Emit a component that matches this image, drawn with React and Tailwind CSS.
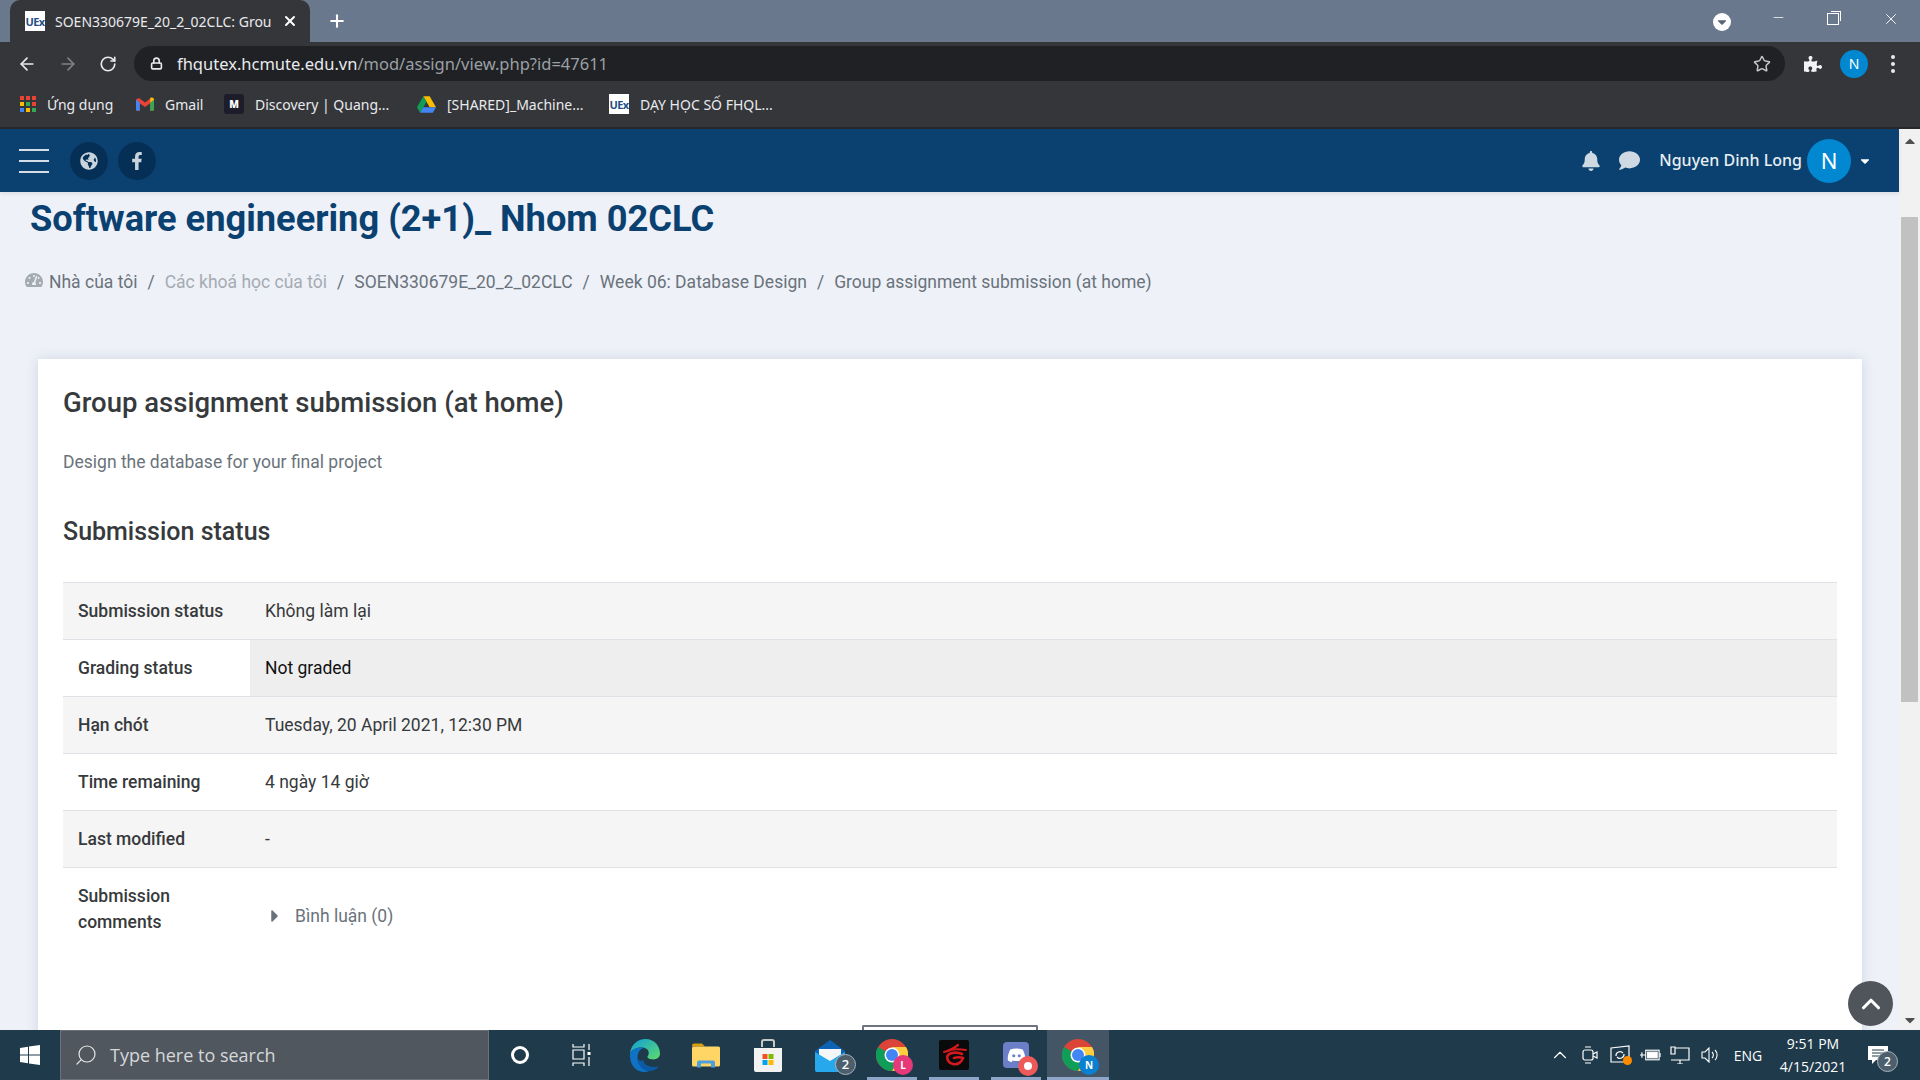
import React from 'react';
import { ArrowLeft, ArrowRight, RotateCw, Lock, Star, X, Plus, Minus, ChevronUp, Search } from 'lucide-react';
import { FaBell, FaComment, FaFacebookF, FaGlobeAmericas, FaPuzzlePiece, FaCaretDown, FaCaretRight, FaCaretUp, FaTachometerAlt } from 'react-icons/fa';

const UExIcon = () => (
  <div className="w-5 h-5 bg-white flex items-center justify-center overflow-hidden shrink-0">
    <span className="text-[11px] font-bold text-[#1f4f86] leading-none tracking-tighter">UEx</span>
  </div>
);

const AppsIcon = () => {
  const colors = ['#ea4335', '#ea4335', '#ea4335', '#fbbc04', '#34a853', '#ea4335', '#4285f4', '#fbbc04', '#34a853'];
  return (
    <div className="grid grid-cols-3 gap-[2px] w-4 h-4 shrink-0">
      {colors.map((c, i) => <svg key={i} viewBox="0 0 4 4" className="w-full h-full"><rect width="4" height="4" fill={c} /></svg>)}
    </div>
  );
};

const GmailIcon = () => (
  <svg viewBox="0 0 24 18" className="w-[18px] h-[14px] shrink-0">
    <path d="M0 3v13a2 2 0 0 0 2 2h3V8l7 5 7-5v10h3a2 2 0 0 0 2-2V3l-4-2-8 6-8-6z" fill="#ea4335" />
    <path d="M0 3v13a2 2 0 0 0 2 2h3V7z" fill="#4285f4" />
    <path d="M24 3v13a2 2 0 0 1-2 2h-3V7z" fill="#34a853" />
    <path d="M19 1v6l5-3.6V3c0-2-2.6-3.4-5-2z" fill="#fbbc04" />
  </svg>
);

const DriveIcon = () => (
  <svg viewBox="0 0 24 21" className="w-[19px] h-[17px] shrink-0">
    <path d="M8 0h8l8 14h-8z" fill="#fbbc04" />
    <path d="M8 0l4 7-8 14-4-7z" fill="#0f9d58" />
    <path d="M8 14h16l-4 7H4z" fill="#4285f4" />
  </svg>
);

const ChromeLogo = ({ badge, badgeClass }) => (
  <div className="relative w-8 h-8">
    <svg viewBox="0 0 32 32" className="w-8 h-8">
      <circle cx="16" cy="16" r="16" fill="#db4437" />
      <path d="M16 16 L2.1 8 A16 16 0 0 0 16 32 L24 18z" fill="#0f9d58" />
      <path d="M16 8h14a16 16 0 0 1-14 24l8-14z" fill="#ffcd40" />
      <circle cx="16" cy="16" r="7.5" fill="#fff" />
      <circle cx="16" cy="16" r="6" fill="#4285f4" />
    </svg>
    <div className={`absolute -right-[5px] -bottom-[4px] w-5 h-5 rounded-full flex items-center justify-center text-[10px] font-bold text-white ${badgeClass}`}>{badge}</div>
  </div>
);

const EdgeLogo = () => (
  <svg viewBox="0 0 32 34" className="w-[31px] h-[33px]">
    <defs>
      <linearGradient id="edgeTop" x1="0" y1="0" x2="1" y2="1">
        <stop offset="0" stopColor="#0f9fd8" />
        <stop offset="1" stopColor="#5fdc6b" />
      </linearGradient>
    </defs>
    <path d="M1 15C2 6 9 0 17 0c9 0 15 7 15 15 0 4-3 6-7 6-3 0-6-1-6-3 2-2 2-6-1-8-6-3-15 0-17 5z" fill="url(#edgeTop)" />
    <path d="M1 15c2-5 10-8 15-6-5 1-8 6-7 12 1 6 6 11 12 12-2 1-4 1-6 1C7 34 0 26 1 15z" fill="#0f72c4" />
    <path d="M9 21c0 6 6 12 12 12 4 0 8-2 10-5-3 1-7 1-10 0-4-1-6-3-6-6-2 1-4 0-6-1z" fill="#0b5aa5" />
  </svg>
);

const FolderLogo = () => (
  <svg viewBox="0 0 28 24" className="w-[28px] h-[25px]">
    <path d="M0 2a2 2 0 0 1 2-2h8l3 3h-13z" fill="#d99e0c" />
    <rect y="3" width="28" height="20" rx="1.5" fill="#ffd566" />
    <path d="M5 24v-5a2 2 0 0 1 2-2h14a2 2 0 0 1 2 2v5h-4v-4h-10v4z" fill="#4d9fdb" />
  </svg>
);

const StoreLogo = () => (
  <svg viewBox="0 0 28 33" className="w-[28px] h-[33px]">
    <path d="M8 8V3a2 2 0 0 1 2-2h8a2 2 0 0 1 2 2v5" fill="none" stroke="#c8c8c8" strokeWidth="2" />
    <path d="M0 9h28v22a2 2 0 0 1-2 2H2a2 2 0 0 1-2-2z" fill="#f2f2f2" />
    <rect x="8.5" y="15" width="5" height="5" fill="#f25022" />
    <rect x="14.5" y="15" width="5" height="5" fill="#7fba00" />
    <rect x="8.5" y="21" width="5" height="5" fill="#00a4ef" />
    <rect x="14.5" y="21" width="5" height="5" fill="#ffb900" />
  </svg>
);

const MailLogo = () => (
  <div className="relative w-[30px] h-[30px]">
    <svg viewBox="0 0 30 32" className="w-[30px] h-[32px]">
      <path d="M0 11 15 0l15 11v19a2 2 0 0 1-2 2H2a2 2 0 0 1-2-2z" fill="#0c63b5" />
      <path d="M4 9h22v8l-11 6-11-6z" fill="#f4f6f8" />
      <path d="M0 12l15 9 15-9v18a2 2 0 0 1-2 2H2a2 2 0 0 1-2-2z" fill="#27a7ec" />
    </svg>
    <div className="absolute -right-[11px] -bottom-[5px] w-[21px] h-[21px] rounded-full bg-[#4d5e6c] border border-[#a9b4bc] flex items-center justify-center text-[13px] font-semibold text-white">2</div>
  </div>
);

const GarenaLogo = () => (
  <div className="w-[30px] h-[30px] bg-[#0a0a0a] rounded-[2px] flex items-center justify-center">
    <svg viewBox="0 0 26 24" className="w-[26px] h-[24px]" fill="none" stroke="#d3191f" strokeLinecap="round">
      <path d="M3 9C8 8 13 5 17 2" strokeWidth="2.2" />
      <path d="M8 7c5-1 11-1 17 0" strokeWidth="1.8" />
      <path d="M21 11c-4-2-11-2-14 1-2 3 0 8 5 9 5 1 9-2 10-6-3-1-6-1-9 0" strokeWidth="2.6" />
    </svg>
  </div>
);

const DiscordLogo = () => (
  <div className="relative w-[26px] h-[26px] rounded-[4px] bg-[#6a7fc8] flex items-center justify-center">
    <svg viewBox="0 0 24 18" className="w-[19px] h-[14px]">
      <path d="M4 2c5-2 11-2 16 0 2 4 4 9 3 14-2 1-3 2-5 2l-1-2c-3 1-7 1-10 0l-1 2c-2 0-3-1-5-2C0 11 2 6 4 2z" fill="#fff" />
      <circle cx="8.5" cy="10" r="2" fill="#6a7fc8" />
      <circle cx="15.5" cy="10" r="2" fill="#6a7fc8" />
    </svg>
    <div className="absolute -right-[9px] -bottom-[8px] w-[20px] h-[20px] rounded-full bg-[#ee5a5a] flex items-center justify-center">
      <div className="w-2 h-2 rounded-full bg-white" />
    </div>
  </div>
);

const WindowsLogo = () => (
  <svg viewBox="0 0 20 20" className="w-5 h-5">
    <path d="M0 3l8-1.2V9.5H0zM9 1.6 20 0v9.5H9zM0 10.5h8v7.7L0 17zM9 10.5h11V20L9 18.4z" fill="#fff" />
  </svg>
);

const taskItems = [
  { id: 'edge', icon: <EdgeLogo /> },
  { id: 'files', icon: <FolderLogo /> },
  { id: 'store', icon: <StoreLogo /> },
  { id: 'mail', icon: <MailLogo /> },
  { id: 'chrome-l', icon: <ChromeLogo badge="L" badgeClass="bg-[#e6397a]" />, open: true },
  { id: 'garena', icon: <GarenaLogo />, open: true },
  { id: 'discord', icon: <DiscordLogo />, open: true },
  { id: 'chrome-n', icon: <ChromeLogo badge="N" badgeClass="bg-[#0b7fd0]" />, open: true, active: true },
];

const rows = [
  { label: 'Submission status', value: 'Không làm lại', bg: 'bg-[#f5f5f5]' },
  { label: 'Grading status', value: 'Not graded', cellBg: 'bg-[#eeeeee] text-[#111]' },
  { label: 'Hạn chót', value: 'Tuesday, 20 April 2021, 12:30 PM', bg: 'bg-[#f5f5f5]' },
  { label: 'Time remaining', value: '4 ngày 14 giờ' },
  { label: 'Last modified', value: '-', bg: 'bg-[#f5f5f5]' },
];

const bookmarks = [
  { icon: <AppsIcon />, text: 'Ứng dụng', cls: 'w-[116px]' },
  { icon: <GmailIcon />, text: 'Gmail', cls: 'w-[88px]' },
  { icon: <div className="w-5 h-5 rounded-[3px] bg-[#1c1c2b] flex items-center justify-center text-[10px] font-black text-white shrink-0">M</div>, text: 'Discovery | Quang...', cls: 'w-[193px]' },
  { icon: <DriveIcon />, text: '[SHARED]_Machine...', cls: 'w-[192px]' },
  { icon: <UExIcon />, text: 'DẠY HỌC SỐ FHQL...', cls: 'w-[180px]' },
];

const BrowserChrome = () => (
  <div className="shrink-0 font-['Noto_Sans',sans-serif]">
    <div className="h-[42px] bg-[#6a788d] flex items-end pl-[10px] relative">
      <div className="w-[300px] h-[42px] bg-[#35363a] rounded-t-[10px] flex items-center pl-[15px] pr-3">
        <UExIcon />
        <span className="ml-[10px] text-[14px] text-[#e8eaed] whitespace-nowrap">SOEN330679E_20_2_02CLC: Grou</span>
        <X size={16} strokeWidth={3} className="ml-auto text-white shrink-0" />
      </div>
      <Plus size={20} strokeWidth={2.5} className="ml-[17px] mb-[11px] text-white" />
      <div className="ml-auto flex items-center h-full pb-2">
        <div className="w-[18px] h-[18px] rounded-full bg-white flex items-center justify-center mr-[40px] mt-[9px]">
          <FaCaretDown size={14} className="text-[#5a6577]" />
        </div>
        <Minus size={15} strokeWidth={1.2} className="text-white mr-[41px] mt-[1px]" />
        <div className="relative w-[12px] h-[12px] border border-white mr-[43px] mt-[3px]">
          <div className="absolute -top-[3px] -right-[3px] w-[10px] h-[10px] border-t border-r border-white" />
        </div>
        <X size={18} strokeWidth={1.2} className="text-white mr-[20px] mt-[3px]" />
      </div>
    </div>
    <div className="h-[43px] bg-[#35363a] flex items-center pl-[17px]">
      <ArrowLeft size={20} className="text-[#e8eaed]" />
      <ArrowRight size={20} className="ml-[21px] text-[#7f8185]" />
      <RotateCw size={18} strokeWidth={2.2} className="ml-[21px] text-[#e8eaed]" />
      <div className="ml-[17px] w-[1651px] h-[35px] rounded-full bg-[#202124] flex items-center pl-[16px]">
        <Lock size={13} strokeWidth={3} className="text-[#e8eaed] shrink-0" />
        <span className="ml-[14px] mt-[2px] text-[16.5px] text-[#e8eaed] whitespace-nowrap">fhqutex.hcmute.edu.vn<span className="text-[#9aa0a6]">/mod/assign/view.php?id=47611</span></span>
        <Star size={18} className="ml-auto mr-[14px] text-[#c4c7c5]" />
      </div>
      <FaPuzzlePiece size={18} className="ml-[19px] text-[#f1f3f4]" />
      <div className="ml-[18px] w-7 h-7 rounded-full bg-[#0288d1] flex items-center justify-center text-[14px] text-white">N</div>
      <div className="ml-[23px] flex flex-col gap-[3px]">
        <div className="w-1 h-1 rounded-full bg-[#e8eaed]" />
        <div className="w-1 h-1 rounded-full bg-[#e8eaed]" />
        <div className="w-1 h-1 rounded-full bg-[#e8eaed]" />
      </div>
    </div>
    <div className="h-[42px] bg-[#35363a] flex items-center pl-5 pb-[4px]">
      {bookmarks.map((b) => (
        <div key={b.text} className={`flex items-center gap-[11px] ${b.cls}`}>
          {b.icon}
          <span className="text-[14px] text-[#e8eaed] whitespace-nowrap">{b.text}</span>
        </div>
      ))}
    </div>
    <div className="h-[2px] bg-[#28292c]" />
  </div>
);

const Navbar = () => (
  <div className="relative z-10 h-[63px] shrink-0 bg-[#0a4170] flex items-center pl-[19px] pr-[27px] shadow-[0_2px_4px_rgba(0,0,0,0.08)]">
    <div className="w-[30px] flex flex-col gap-[9px]">
      <div className="h-[2px] bg-[#d5dde6]" />
      <div className="h-[2px] bg-[#d5dde6]" />
      <div className="h-[2px] bg-[#d5dde6]" />
    </div>
    <div className="ml-[21px] w-[38px] h-[38px] rounded-full bg-[#062f55] flex items-center justify-center">
      <FaGlobeAmericas size={18} className="text-[#c9d3dc]" />
    </div>
    <div className="ml-[10px] w-[38px] h-[38px] rounded-full bg-[#062f55] flex items-center justify-center">
      <FaFacebookF size={18} className="text-[#c9d3dc]" />
    </div>
    <FaBell size={20} className="ml-auto text-[#cfd9e2]" />
    <FaComment size={21} className="ml-[18px] text-[#cfd9e2]" />
    <span className="ml-[19px] -mt-[2px] text-[16px] font-medium text-[#e9eef3] whitespace-nowrap">Nguyen Dinh Long</span>
    <div className="ml-[5px] w-11 h-11 rounded-full bg-[#0288d1] flex items-center justify-center text-[22px] text-white">N</div>
    <FaCaretDown size={14} className="ml-[7px] text-white" />
  </div>
);

const Scrollbar = () => (
  <div className="w-[21px] shrink-0 bg-[#f1f1f1] flex flex-col items-center">
    <FaCaretUp size={16} className="mt-[4px] text-[#505050]" />
    <div className="mt-[68px] w-[17px] h-[485px] bg-[#c1c1c1]" />
    <FaCaretDown size={16} className="mt-auto mb-[2px] text-[#505050]" />
  </div>
);

const Page = () => (
  <div className="flex-1 overflow-hidden bg-[#eef1f8] font-['Roboto',sans-serif]">
    <h1 className="mt-[5px] pl-[30px] text-[36.25px] leading-[44px] font-bold text-[#0a4170]">Software engineering (2+1)_ Nhom 02CLC</h1>
    <div className="mt-[28px] pl-[25px] h-[26px] flex items-center text-[17.5px] text-[#6a737b]">
      <FaTachometerAlt size={18} className="text-[#a5abb2] mr-[6px] -mt-1" />
      <span>Nhà của tôi</span>
      <span className="mx-[10px]">/</span>
      <span className="text-[#a5abb2]">Các khoá học của tôi</span>
      <span className="mx-[10px]">/</span>
      <span>SOEN330679E_20_2_02CLC</span>
      <span className="mx-[10px]">/</span>
      <span>Week 06: Database Design</span>
      <span className="mx-[10px]">/</span>
      <span>Group assignment submission (at home)</span>
    </div>
    <div className="mt-[64px] ml-[38px] w-[1824px] bg-white shadow-[0_0_12px_rgba(30,50,90,0.14)] px-[25px] pt-[26px] pb-[200px]">
      <h2 className="text-[27.5px] leading-[36px] font-medium text-[#373a3c]">Group assignment submission (at home)</h2>
      <p className="mt-[28px] text-[17.5px] leading-[27px] text-[#6a737b]">Design the database for your final project</p>
      <h3 className="mt-[41px] text-[25px] leading-[30px] font-medium text-[#373a3c]">Submission status</h3>
      <table className="mt-[35px] w-full text-[17.5px] leading-[26px] text-[#373a3c] border-collapse">
        <tbody>
          {rows.map((r) => (
            <tr key={r.label} className={`h-[57px] border-t border-[#dee2e6] ${r.bg || ''}`}>
              <th className="w-[187px] pl-[15px] text-left font-medium">{r.label}</th>
              <td className={`pl-[15px] ${r.cellBg || ''}`}>{r.value}</td>
            </tr>
          ))}
          <tr className="h-[95px] border-t border-[#dee2e6]">
            <th className="w-[187px] pl-[15px] pr-[40px] pt-[15px] align-top text-left font-medium">Submission comments</th>
            <td className="pl-[15px] pt-[2px]">
              <div className="flex items-center text-[#6a737b]">
                <FaCaretRight size={20} />
                <span className="ml-[10px]">Bình luận (0)</span>
              </div>
            </td>
          </tr>
        </tbody>
      </table>
    </div>
  </div>
);

const Taskbar = () => (
  <div className="relative z-10 h-[50px] shrink-0 bg-[#1f3b4b] flex items-stretch font-['Open_Sans',sans-serif] text-white">
    <div className="w-[60px] flex items-center justify-center"><WindowsLogo /></div>
    <div className="w-[429px] bg-[#50575f] border border-[#6b7179] flex items-center pl-[13px]">
      <Search size={24} strokeWidth={1.2} className="text-[#e6e6e6] -scale-x-100" />
      <span className="ml-[12px] text-[18px] text-[#d6d8da]">Type here to search</span>
    </div>
    <div className="w-[61px] flex items-center justify-center">
      <div className="w-[18px] h-[18px] rounded-full border-[3px] border-white" />
    </div>
    <div className="w-[63px] flex items-center justify-center">
      <svg viewBox="0 0 20 24" className="w-5 h-6" fill="none" stroke="#fff" strokeWidth="1.2">
        <path d="M1 1v3h11V1M1 7h11v9H1zM1 23v-3h11v3M17 1v6M17 14v9" />
        <rect x="15.5" y="9" width="3" height="3" fill="#fff" stroke="none" />
      </svg>
    </div>
    {taskItems.map((t) => (
      <div key={t.id} className={`relative w-[62px] flex items-center justify-center ${t.active ? 'bg-[#445666]' : ''}`}>
        {t.icon}
        {t.open && <div className={`absolute bottom-0 h-[3px] bg-[#8fa5c8] ${t.active ? 'inset-x-0' : 'inset-x-[6px]'}`} />}
      </div>
    ))}
    <div className="ml-auto flex items-center">
      <div className="w-[30px] flex justify-center"><ChevronUp size={22} strokeWidth={1.2} /></div>
      <div className="w-[30px] flex justify-center">
        <svg viewBox="0 0 16 20" className="w-4 h-5" fill="none" stroke="#fff" strokeWidth="1.2"><rect x="1" y="5" width="10" height="10" rx="2" /><path d="M11 9l4-2v6l-4-2M3 2h6M3 18h6" /></svg>
      </div>
      <div className="w-[30px] flex justify-center relative">
        <svg viewBox="0 0 20 20" className="w-5 h-5" fill="none" stroke="#fff" strokeWidth="1.2"><path d="M1 3l18-2v16H1zM6 11a4 4 0 0 1 7-3M14 9a4 4 0 0 1-7 3" /></svg>
        <div className="absolute right-[3px] bottom-0 w-[9px] h-[9px] rounded-full bg-[#ff8c00]" />
      </div>
      <div className="w-[30px] flex justify-center">
        <svg viewBox="0 0 22 14" className="w-[21px] h-[14px]" fill="none" stroke="#fff" strokeWidth="1.2"><rect x="6" y="2" width="14" height="10" /><rect x="8" y="4" width="10" height="6" fill="#fff" /><path d="M21 5v4M0 7h6M2 4v6" /></svg>
      </div>
      <div className="w-[30px] flex justify-center">
        <svg viewBox="0 0 20 18" className="w-5 h-[18px]" fill="none" stroke="#fff" strokeWidth="1.2"><path d="M5 2h14v12H1M7 18h6M10 14v4M1 1h4v7H1z" /></svg>
      </div>
      <div className="w-[30px] flex justify-center">
        <svg viewBox="0 0 18 16" className="w-[18px] h-4" fill="none" stroke="#fff" strokeWidth="1.1"><path d="M1 5h3l4-4v14l-4-4H1zM11 5a4 4 0 0 1 0 6M14 3a7 7 0 0 1 0 10" /></svg>
      </div>
      <div className="w-[46px] text-center text-[14px]">ENG</div>
      <div className="w-[84px] text-center text-[14px] leading-[23px]">
        <div>9:51 PM</div>
        <div>4/15/2021</div>
      </div>
      <div className="w-[65px] pl-[13px] relative flex items-center">
        <svg viewBox="0 0 20 18" className="w-5 h-[18px]"><path d="M0 0h20v14H8l-4 4v-4H0z" fill="#fff" /><path d="M4 4h12M4 7h12M4 10h8" stroke="#1f3b4b" strokeWidth="1" /></svg>
        <div className="absolute left-[22px] top-[5px] w-[21px] h-[21px] rounded-full bg-[#4d5e6c] border border-[#a9b4bc] flex items-center justify-center text-[12px] font-semibold">2</div>
      </div>
    </div>
  </div>
);

export default function App() {
  return (
    <div className="relative w-[1920px] h-[1080px] overflow-hidden flex flex-col bg-white">
      <BrowserChrome />
      <div className="flex-1 flex min-h-0">
        <div className="flex-1 flex flex-col min-w-0">
          <Navbar />
          <Page />
        </div>
        <Scrollbar />
      </div>
      <Taskbar />
      {/* floating stuff over the page */}
      <div className="absolute left-[862px] top-[1025px] w-[176px] h-[5px] bg-white border-t-2 border-x-2 border-[#6e7480] rounded-t-[2px]" />
      <div className="absolute left-[1848px] top-[981px] w-[45px] h-[45px] rounded-full bg-[#50555c] flex items-center justify-center">
        <ChevronUp size={30} strokeWidth={2.5} className="text-white" />
      </div>
    </div>
  );
}
